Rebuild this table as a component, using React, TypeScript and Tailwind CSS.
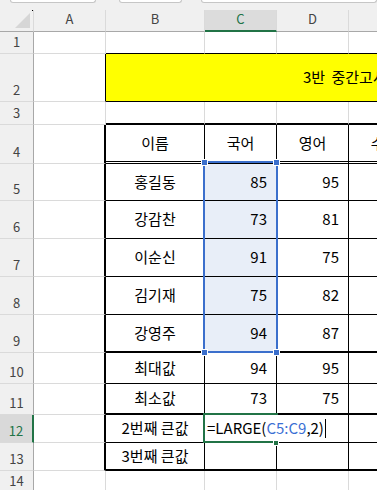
import React from "react";

type CellDef = { w: string; cls: string; t?: string; a?: "c" | "r"; bg?: string };

const gR = "border-r border-r-[#dadada]";
const gB = "border-b border-b-[#dadada]";
const kR = "border-r border-r-black";
const kR2 = "border-r-2 border-r-black";
const kB = "border-b border-b-black";
const kB2 = "border-b-2 border-b-black";
const kBD = "border-b-[3px] border-double border-b-black";
const nR = "border-r-0";

const WA = "w-[72px]";
const WB = "w-[99px]";
const WC = "w-[72px]";
const WD = "w-[72px]";
const WE = "w-[72px]";
const SEL = "bg-[#e8eef8]";

function Cell({ w, cls, t, a, bg }: CellDef) {
  return (
    <div
      className={`box-border shrink-0 h-full flex items-center ${w} ${cls} ${bg ?? "bg-white"} ${
        a === "r" ? "justify-end pr-[9px]" : "justify-center"
      } whitespace-nowrap overflow-visible`}
    >
      {t}
    </div>
  );
}

function RowHead({ n, sel }: { n: string; sel?: boolean }) {
  return (
    <div
      className={`box-border shrink-0 w-[34px] h-full flex items-end justify-center pb-[3px] text-[13px] leading-[16px] border-b border-b-[#dadada] ${
        sel
          ? "bg-[#d9d9d9] text-[#217346] border-r-2 border-r-[#217346]"
          : "bg-[#f0f0f0] text-[#444444] border-r border-r-[#a8a8a8]"
      }`}
    >
      {n}
    </div>
  );
}

function Row({ h, n, sel, cells }: { h: string; n: string; sel?: boolean; cells: CellDef[] }) {
  return (
    <div className={`flex ${h}`}>
      <RowHead n={n} sel={sel} />
      {cells.map((c, i) => (
        <Cell key={i} {...c} />
      ))}
    </div>
  );
}

function tableRow(
  name: string,
  c: string,
  d: string,
  bottom: string,
  cSel: boolean,
  cNoRight = false
): CellDef[] {
  return [
    { w: WA, cls: `${kR2} ${gB}` },
    { w: WB, cls: `${kR} ${bottom}`, t: name },
    { w: WC, cls: `${cNoRight ? nR : kR} ${bottom}`, t: c, a: "r", bg: cSel ? SEL : "bg-white" },
    { w: WD, cls: `${kR} ${bottom}`, t: d, a: "r" },
    { w: WE, cls: `${kR} ${bottom}`, t: "", a: "r" },
  ];
}

export default function App() {
  return (
    <div className="relative w-[377px] h-[490px] overflow-hidden bg-white text-black font-['Noto_Sans_CJK_KR','Noto_Sans',sans-serif]">
      {/* top strip */}
      <div className="flex h-[10px] bg-[#f0f0f0]">
        <div className="ml-[10px] w-[98px] h-[3px] box-border border-x border-b border-[#c6c6c6] rounded-b-[4px] bg-white" />
        <div className="ml-[23px] w-[71px] h-[3px] box-border border-x border-b border-[#c6c6c6] rounded-b-[4px] bg-white" />
        <div className="ml-[19px] w-[200px] h-[3px] box-border border-x border-b border-[#c6c6c6] rounded-b-[4px] bg-white" />
      </div>

      {/* column header */}
      <div className="flex h-[22px] bg-[#f0f0f0] text-[13px] text-[#444444]">
        <div className="relative box-border shrink-0 w-[34px] h-full border-b border-b-[#a8a8a8] border-r border-r-[#dadada]">
          <svg className="absolute left-0 top-0" width="34" height="22" viewBox="0 0 34 22">
            <polygon points="15,18 30,18 30,3" fill="#d6d6d6" />
          </svg>
          <span className="absolute right-0 top-0 w-px h-px bg-black" />
        </div>
        <div className={`box-border shrink-0 ${WA} h-full flex items-center justify-center pb-[4px] border-b border-b-[#a8a8a8] ${gR}`}>A</div>
        <div className={`box-border shrink-0 ${WB} h-full flex items-center justify-center pb-[4px] border-b border-b-[#a8a8a8] ${gR}`}>B</div>
        <div className={`box-border shrink-0 ${WC} h-full flex items-center justify-center pb-[2px] border-b-2 border-b-[#217346] bg-[#dcdcdc] text-[#217346] ${gR}`}>C</div>
        <div className={`box-border shrink-0 ${WD} h-full flex items-center justify-center pb-[4px] border-b border-b-[#a8a8a8] ${gR}`}>D</div>
        <div className={`box-border shrink-0 ${WE} h-full flex items-center justify-center pb-[4px] border-b border-b-[#a8a8a8] ${gR}`}>E</div>
      </div>

      <div className="text-[15px]">
        <Row
          h="h-[22px]"
          n="1"
          cells={[
            { w: WA, cls: `${gR} ${gB}` },
            { w: WB, cls: `${gR} ${kB}` },
            { w: WC, cls: `${gR} ${kB}` },
            { w: WD, cls: `${gR} ${kB}` },
            { w: WE, cls: `${gR} ${kB}` },
          ]}
        />
        <div className="flex h-[48px]">
          <RowHead n="2" />
          <Cell w={WA} cls={`${kR} ${gB}`} />
          <div className={`box-border shrink-0 w-[400px] h-full flex items-center pl-[197px] bg-[#ffff00] ${kB} whitespace-nowrap [word-spacing:3px]`}>
            3반 중간고사 성적표
          </div>
        </div>
        <Row
          h="h-[23px]"
          n="3"
          cells={[
            { w: WA, cls: `${gR} ${gB}` },
            { w: WB, cls: `${gR} ${kB2}` },
            { w: WC, cls: `${gR} ${kB2}` },
            { w: WD, cls: `${gR} ${kB2}` },
            { w: WE, cls: `${gR} ${kB2}` },
          ]}
        />
        <Row
          h="h-[39px]"
          n="4"
          cells={[
            { w: WA, cls: `${kR2} ${gB}` },
            { w: WB, cls: `${kR} ${kBD}`, t: "이름" },
            { w: WC, cls: `${kR} ${kBD}`, t: "국어" },
            { w: WD, cls: `${kR} ${kBD}`, t: "영어" },
            { w: WE, cls: `${kR} ${kBD}`, t: "수학" },
          ]}
        />
        <Row h="h-[37px]" n="5" cells={tableRow("홍길동", "85", "95", kB, true)} />
        <Row h="h-[38px]" n="6" cells={tableRow("강감찬", "73", "81", kB, true)} />
        <Row h="h-[38px]" n="7" cells={tableRow("이순신", "91", "75", kB, true)} />
        <Row h="h-[38px]" n="8" cells={tableRow("김기재", "75", "82", kB, true)} />
        <Row h="h-[38px]" n="9" cells={tableRow("강영주", "94", "87", kB2, true)} />
        <Row h="h-[31px]" n="10" cells={tableRow("최대값", "94", "95", kB, false)} />
        <Row h="h-[31px]" n="11" cells={tableRow("최소값", "73", "75", kB2, false)} />
        <Row h="h-[28px]" n="12" sel cells={tableRow("2번째 큰값", "", "", kB, false, true)} />
        <Row h="h-[28px]" n="13" cells={tableRow("3번째 큰값", "", "", kB2, false)} />
        <Row
          h="h-[22px]"
          n="14"
          cells={[
            { w: WA, cls: `${gR} ${gB}` },
            { w: WB, cls: `${gR} ${gB}` },
            { w: WC, cls: `${gR} ${gB}` },
            { w: WD, cls: `${gR} ${gB}` },
            { w: WE, cls: `${gR} ${gB}` },
          ]}
        />
      </div>

      {/* selection C5:C9 */}
      <div className="absolute left-[203px] top-[161px] w-[75px] h-[192px] box-border border-2 border-[#3b6fcc] pointer-events-none" />
      <div className="absolute left-[201px] top-[159px] w-[7px] h-[7px] box-border border border-white bg-[#3b6fcc]" />
      <div className="absolute left-[273px] top-[159px] w-[7px] h-[7px] box-border border border-white bg-[#3b6fcc]" />
      <div className="absolute left-[201px] top-[349px] w-[7px] h-[7px] box-border border border-white bg-[#3b6fcc]" />
      <div className="absolute left-[273px] top-[349px] w-[7px] h-[7px] box-border border border-white bg-[#3b6fcc]" />

      {/* active cell C12 */}
      <div className="absolute left-[203px] top-[413px] w-[75px] h-[30px] box-border border-y-2 border-l-2 border-[#217346]" />
      <div className="absolute left-[273px] top-[440px] w-[6px] h-[6px] box-border border border-white bg-[#217346]" />
      <div className="absolute left-[207px] top-[415px] h-[26px] flex items-center text-[15px] whitespace-nowrap">
        <span>=LARGE(</span>
        <span className="text-[#3b6fd4]">C5:C9</span>
        <span>,2)</span>
        <span className="inline-block w-px h-[19px] bg-black ml-[1px]" />
      </div>
    </div>
  );
}
